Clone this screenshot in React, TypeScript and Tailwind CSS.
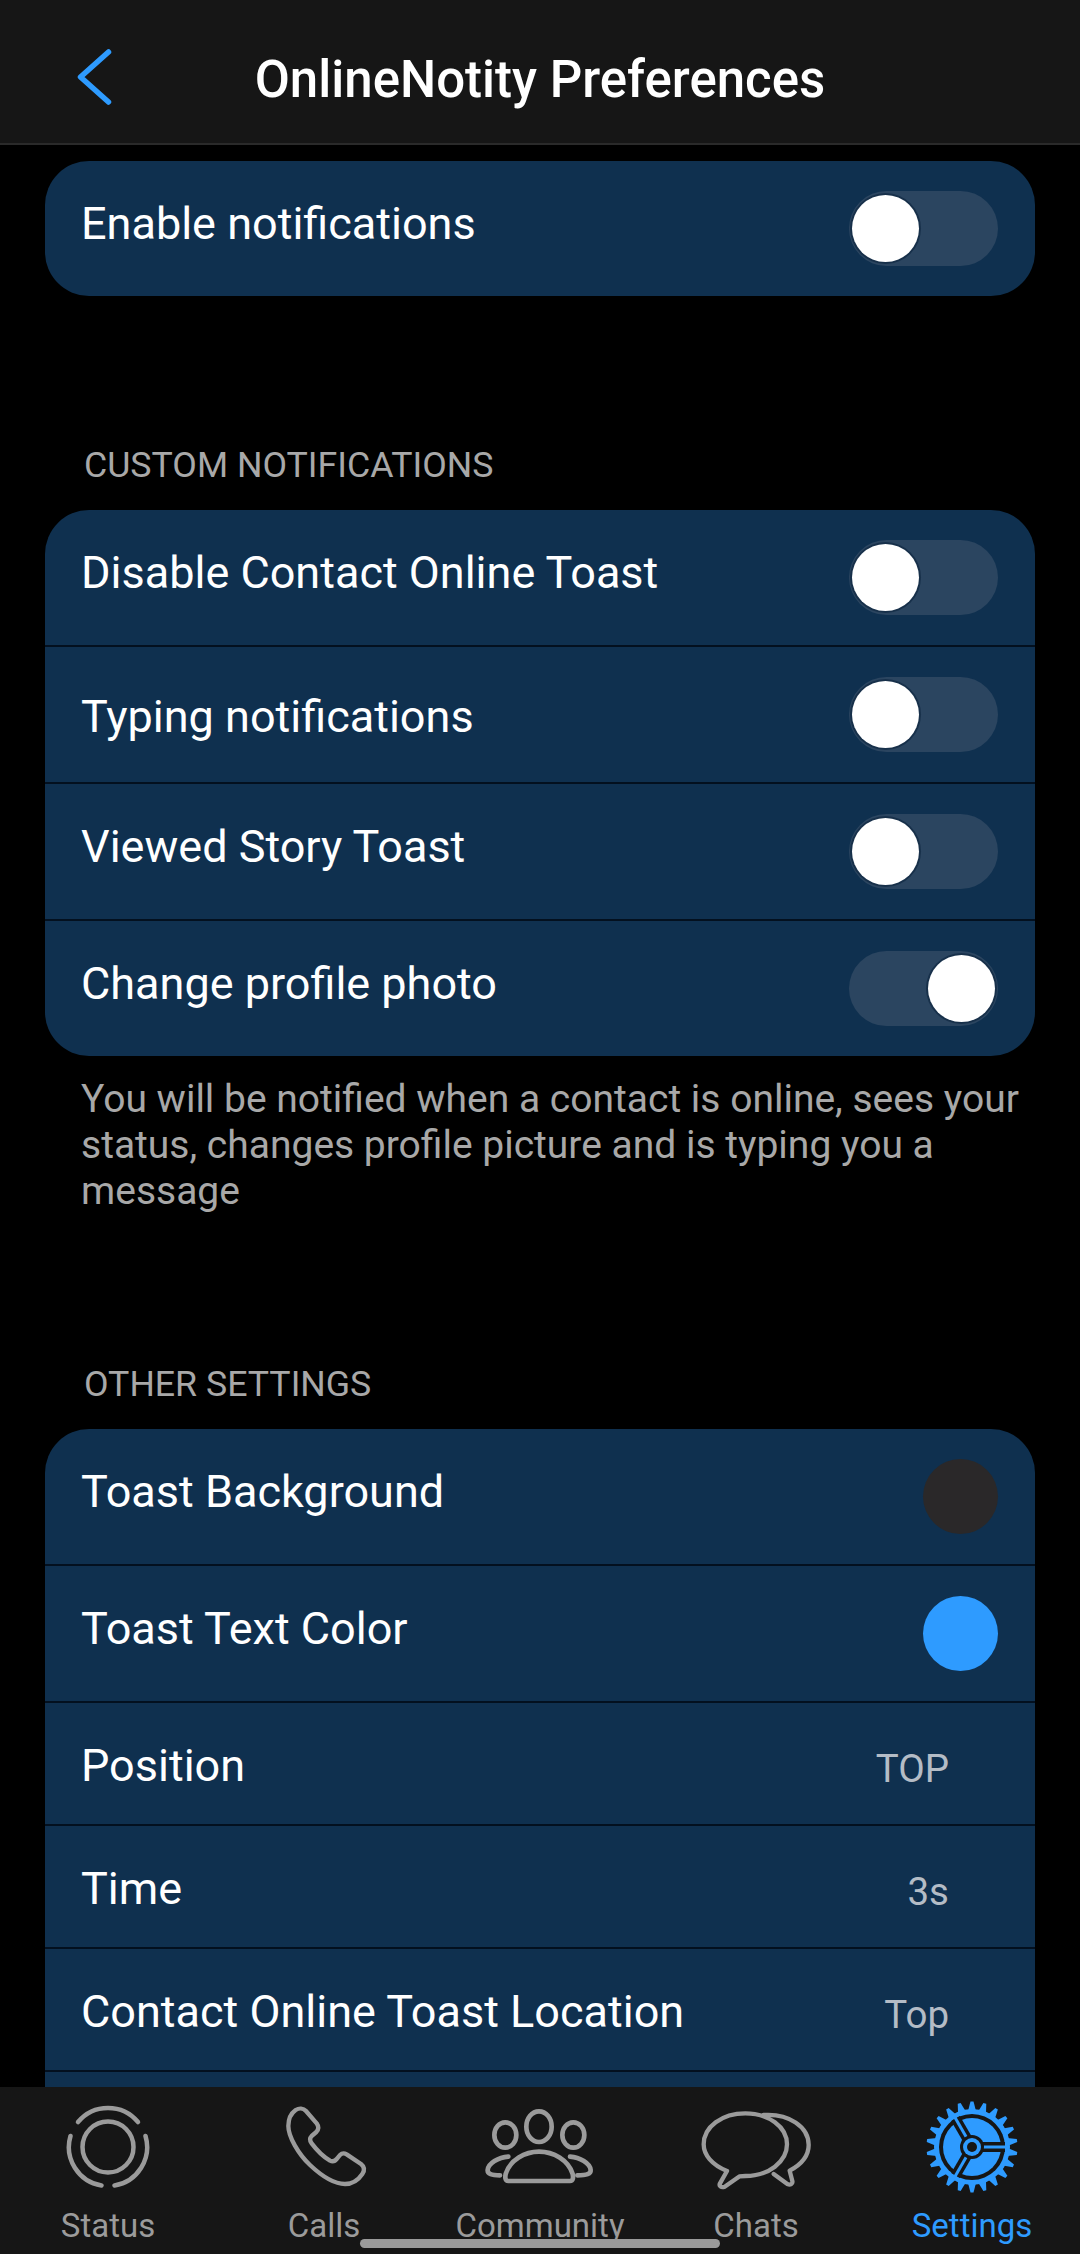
import type { ReactNode } from 'react';

const font = { fontFamily: 'Roboto, sans-serif' };

function Toggle({ on = false }: { on?: boolean }) {
  return (
    <div className={`flex h-[75px] w-[149px] items-center rounded-full bg-[#2b4560] px-[3px] ${on ? 'justify-end' : 'justify-start'}`}>
      <div className="h-[67px] w-[67px] rounded-full bg-white shadow-[0_0_0_2px_rgba(15,40,65,0.7)]" />
    </div>
  );
}

function Swatch({ color }: { color: string }) {
  return <div className={`h-[75px] w-[75px] rounded-full ${color}`} />;
}

function Value({ children }: { children: ReactNode }) {
  return <span className="mr-[49px] pt-[10px] text-[38.5px] text-[#b4bcc6]">{children}</span>;
}

function Row({ label, right, height = 'h-[137px]', last = false, lift = 'pb-[10px]' }: { label: string; right?: ReactNode; height?: string; last?: boolean; lift?: string }) {
  return (
    <div className={`flex items-center justify-between pl-[36px] pr-[37px] ${height} ${last ? '' : 'border-b-2 border-[#03101f]'}`}>
      <span className={`text-[45px] leading-none text-white ${lift}`}>{label}</span>
      {right}
    </div>
  );
}

function SectionTitle({ children, className }: { children: ReactNode; className: string }) {
  return <div className={`pl-[84px] text-[35.7px] leading-[40px] text-[#a8a8a8] ${className}`}>{children}</div>;
}

function StatusIcon() {
  return (
    <svg width="84" height="84" viewBox="-42 -42 84 84" fill="none" stroke="#9b9b9b" strokeWidth="4.5" strokeLinecap="round">
      <circle r="25.5" />
      <path d="M-30 -25A39 39 0 0 1 30 -25" />
      <path d="M-37.5 -11A39 39 0 0 0 -6.5 38.5" />
      <path d="M37.5 -11A39 39 0 0 1 6.5 38.5" />
    </svg>
  );
}

function CallsIcon() {
  return (
    <svg width="100" height="95" viewBox="-3 0 300 285" fill="none" stroke="#9b9b9b" strokeWidth="13" strokeLinejoin="round">
      <path d="M62 30C72 24 85 24 93 33L125 70C132 80 132 88 124 96L110 108C104 114 104 122 110 130C125 150 145 170 165 182C173 186 180 184 186 176L195 165C200 160 208 159 215 163L258 192C268 200 270 210 262 222C250 240 232 252 210 252C180 252 140 228 105 195C70 162 40 110 40 78C40 58 48 40 62 30Z" />
    </svg>
  );
}

function CommunityIcon() {
  return (
    <svg width="130" height="95" viewBox="0 0 390 285" fill="none" stroke="#9b9b9b" strokeWidth="14" strokeLinecap="round" strokeLinejoin="round">
      <ellipse cx="192" cy="80" rx="38" ry="46" />
      <ellipse cx="91" cy="105" rx="33" ry="38" />
      <ellipse cx="295" cy="105" rx="33" ry="38" />
      <path d="M100 243C90 243 90 232 92 222C105 180 150 155 192 155C235 155 280 180 293 222C295 232 295 243 285 243Z" />
      <path d="M100 170C70 172 40 190 38 210C37 222 50 226 75 226" />
      <path d="M285 170C315 172 345 190 347 210C348 222 335 226 307 226" />
    </svg>
  );
}

function ChatsIcon() {
  return (
    <svg width="125" height="95" viewBox="-4 0 375 285" fill="none" stroke="#9b9b9b" strokeWidth="13" strokeLinecap="round" strokeLinejoin="round">
      <path d="M95 213C50 195 25 165 25 133C25 80 80 40 150 40C220 40 275 80 275 133C275 185 220 228 150 228C143 228 138 228 133 229L88 260C78 264 70 258 74 250Z" />
      <path d="M205 45C280 40 340 80 340 135C340 170 315 195 283 212L291 243C293 252 285 256 276 252L235 222" />
    </svg>
  );
}

// toothed ring with three spokes meeting at a hub
function SettingsIcon() {
  const teeth = Array.from({ length: 22 }, (_, i) => (i * 360) / 22);
  const spokes = [90, 210, 330];
  return (
    <svg width="92" height="92" viewBox="-46 -46 92 92">
      {teeth.map((a) => (
        <polygon key={a} points="-4,-36 -1.5,-45.500 1.5,-45.500 4,-36" fill="#2e9bff" transform={`rotate(${a})`} />
      ))}
      <circle r="38" fill="#2e9bff" />
      <circle r="33" fill="#161616" />
      <circle r="29" fill="#2e9bff" />
      {spokes.map((a) => (
        <g key={a} transform={`rotate(${a})`}>
          <rect x="-5" y="-33" width="10" height="33" fill="#161616" />
          <rect x="-1.500" y="-34" width="3" height="34" fill="#2e9bff" />
        </g>
      ))}
      <circle r="12" fill="#161616" />
      <circle r="9" fill="#2e9bff" />
      <circle r="5" fill="#161616" />
    </svg>
  );
}

function Tab({ label, icon, active = false }: { label: string; icon: ReactNode; active?: boolean }) {
  return (
    <div className="flex flex-col items-center">
      <div className="flex h-[96px] items-center justify-center">{icon}</div>
      <span className={`mt-[11px] text-[33px] leading-[40px] ${active ? 'text-[#2e9bff]' : 'text-[#9b9b9b]'}`}>{label}</span>
    </div>
  );
}

export default function App() {
  return (
    <div className="relative flex h-[2254px] w-[1080px] flex-col overflow-hidden bg-black" style={font}>
      <header className="relative flex h-[145px] shrink-0 items-center justify-center border-b-2 border-[#2a2a2a] bg-[#161616] pt-[16px]">
        <svg className="absolute left-[76px] top-[47px]" width="38" height="60" viewBox="0 0 38 60" fill="none" stroke="#2e9bff" strokeWidth="5.500" strokeLinecap="round" strokeLinejoin="round">
          <path d="M32.500 5 4.500 30l28 25" />
        </svg>
        <h1 className="text-[51px] leading-none font-medium text-white">OnlineNotity Preferences</h1>
      </header>

      <main className="min-h-0 flex-1 overflow-hidden pt-[16px]">
        <div className="mx-[45px] overflow-hidden rounded-[44px] bg-[#0f304f]">
          <Row label="Enable notifications" right={<Toggle />} height="h-[135px]" last />
        </div>

        <SectionTitle className="mt-[149px] mb-[25px]">CUSTOM NOTIFICATIONS</SectionTitle>
        <div className="mx-[45px] overflow-hidden rounded-[44px] bg-[#0f304f]">
          <Row label="Disable Contact Online Toast" right={<Toggle />} />
          <Row label="Typing notifications" right={<Toggle />} lift="pt-[3px]" />
          <Row label="Viewed Story Toast" right={<Toggle />} />
          <Row label="Change profile photo" right={<Toggle on />} height="h-[135px]" last />
        </div>
        <p className="mt-[20px] pl-[81px] pr-[40px] text-[39px] leading-[46px] text-[#a8a8a8]">
          You will be notified when a contact is online, sees your status, changes profile picture and is typing you a message
        </p>

        <SectionTitle className="mt-[150px] mb-[25px]">OTHER SETTINGS</SectionTitle>
        <div className="mx-[45px] overflow-hidden rounded-t-[44px] bg-[#0f304f]">
          <Row label="Toast Background" right={<Swatch color="bg-[#2a2829]" />} />
          <Row label="Toast Text Color" right={<Swatch color="bg-[#2e9bff]" />} />
          <Row label="Position" right={<Value>TOP</Value>} height="h-[123px]" lift="pt-[4px]" />
          <Row label="Time" right={<Value>3s</Value>} height="h-[123px]" lift="pt-[3px]" />
          <Row label="Contact Online Toast Location" right={<Value>Top</Value>} height="h-[123px]" lift="pt-[3px]" />
          <div className="h-[60px]" />
        </div>
      </main>

      <nav className="grid h-[167px] shrink-0 grid-cols-5 bg-[#161616] pt-[12px]">
        <Tab label="Status" icon={<StatusIcon />} />
        <Tab label="Calls" icon={<CallsIcon />} />
        <Tab label="Community" icon={<CommunityIcon />} />
        <Tab label="Chats" icon={<ChatsIcon />} />
        <Tab label="Settings" icon={<SettingsIcon />} active />
      </nav>
      {/* home indicator */}
      <div className="absolute bottom-[6px] left-[360px] h-[9px] w-[360px] rounded-full bg-[#9a9a9a]" />
    </div>
  );
}
